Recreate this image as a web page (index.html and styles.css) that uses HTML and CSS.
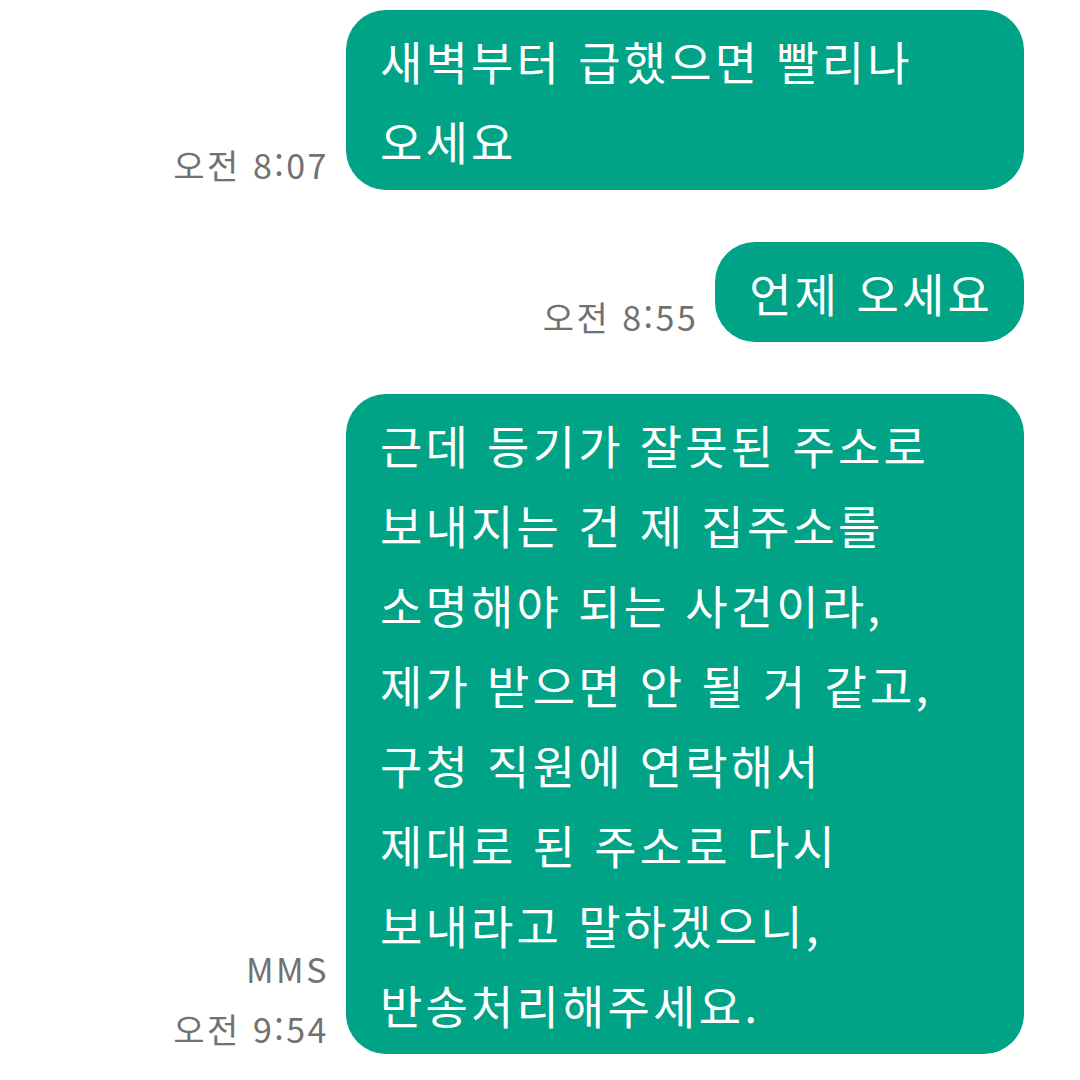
FILE: index.html
```html
<!DOCTYPE html>
<html lang="ko">
<head>
    <meta charset="UTF-8">
    <meta name="viewport" content="width=device-width, initial-scale=1.0">
    <title>메시지</title>
    <link rel="stylesheet" href="styles.css">
</head>
<body>
    <div class="chat">
        <div class="row">
            <div class="meta">
                <div class="time">오전 8:07</div>
            </div>
            <div class="bubble wide">새벽부터 급했으면 빨리나<br>오세요</div>
        </div>
        <div class="row">
            <div class="meta">
                <div class="time">오전 8:55</div>
            </div>
            <div class="bubble">언제 오세요</div>
        </div>
        <div class="row">
            <div class="meta">
                <div class="type">MMS</div>
                <div class="time">오전 9:54</div>
            </div>
            <div class="bubble wide">근데 등기가 잘못된 주소로<br>보내지는 건 제 집주소를<br>소명해야 되는 사건이라,<br>제가 받으면 안 될 거 같고,<br>구청 직원에 연락해서<br>제대로 된 주소로 다시<br>보내라고 말하겠으니,<br>반송처리해주세요.</div>
        </div>
    </div>
</body>
</html>
```

FILE: styles.css
```css
body {
    margin: 0;
    padding: 0;
    background-color: #fff;
    font-family: "Noto Sans CJK KR", "Noto Sans", sans-serif;
}
.chat {
    display: flex;
    flex-direction: column;
    align-items: flex-end;
    gap: 52px;
    padding: 10px 56px 0 0;
}
.row {
    display: flex;
    align-items: flex-end;
    gap: 17px;
}
.meta {
    text-align: right;
    color: #717171;
    font-size: 34px;
    line-height: 50px;
    letter-spacing: 2.5px;
}
.meta .type {
    margin-bottom: 10px;
}
.bubble {
    background-color: #00a386;
    color: #fff;
    font-size: 46px;
    line-height: 80px;
    letter-spacing: 3.2px;
    padding: 10px 31px 10px 34px;
    border-radius: 40px;
    word-break: keep-all;
    white-space: nowrap;
}
.bubble.wide {
    width: 613px;
}
```
